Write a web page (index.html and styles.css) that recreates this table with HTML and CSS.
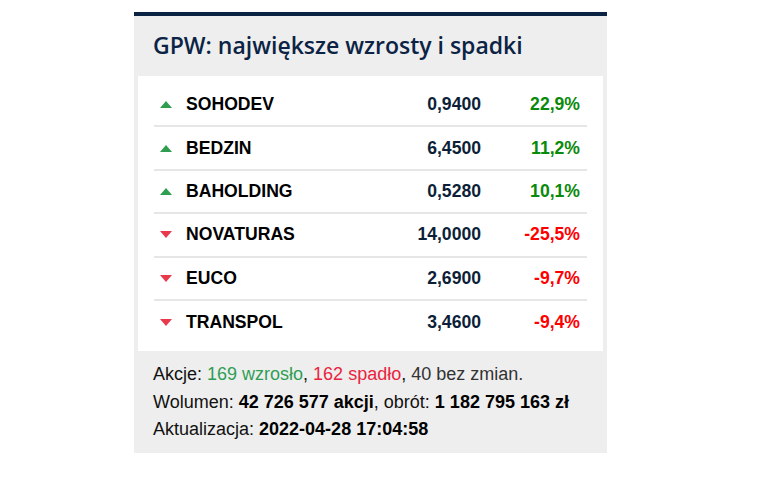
FILE: index.html
```html
<!DOCTYPE html>
<html lang="pl">
<head>
<meta charset="utf-8">
<title>GPW</title>
<link rel="stylesheet" href="styles.css">
</head>
<body>
<div class="widget">
  <h2 class="title">GPW: największe wzrosty i spadki</h2>
  <div class="table">
    <div class="row">
      <span class="arrow"><svg width="12" height="7" viewBox="0 0 12 7"><polygon points="6,0 12,7 0,7" class="up"/></svg></span>
      <span class="name">SOHODEV</span>
      <span class="price">0,9400</span>
      <span class="pct pos">22,9%</span>
    </div>
    <div class="row">
      <span class="arrow"><svg width="12" height="7" viewBox="0 0 12 7"><polygon points="6,0 12,7 0,7" class="up"/></svg></span>
      <span class="name">BEDZIN</span>
      <span class="price">6,4500</span>
      <span class="pct pos">11,2%</span>
    </div>
    <div class="row">
      <span class="arrow"><svg width="12" height="7" viewBox="0 0 12 7"><polygon points="6,0 12,7 0,7" class="up"/></svg></span>
      <span class="name">BAHOLDING</span>
      <span class="price">0,5280</span>
      <span class="pct pos">10,1%</span>
    </div>
    <div class="row">
      <span class="arrow"><svg width="12" height="7" viewBox="0 0 12 7"><polygon points="0,0 12,0 6,7" class="down"/></svg></span>
      <span class="name">NOVATURAS</span>
      <span class="price">14,0000</span>
      <span class="pct neg">-25,5%</span>
    </div>
    <div class="row">
      <span class="arrow"><svg width="12" height="7" viewBox="0 0 12 7"><polygon points="0,0 12,0 6,7" class="down"/></svg></span>
      <span class="name">EUCO</span>
      <span class="price">2,6900</span>
      <span class="pct neg">-9,7%</span>
    </div>
    <div class="row last">
      <span class="arrow"><svg width="12" height="7" viewBox="0 0 12 7"><polygon points="0,0 12,0 6,7" class="down"/></svg></span>
      <span class="name">TRANSPOL</span>
      <span class="price">3,4600</span>
      <span class="pct neg">-9,4%</span>
    </div>
  </div>
  <div class="footer">
    <p>Akcje: <span class="g">169 wzrosło</span>, <span class="r">162 spadło</span>, <span class="n">40 bez zmian.</span></p>
    <p>Wolumen: <b>42 726 577 akcji</b>, obrót: <b>1 182 795 163 zł</b></p>
    <p>Aktualizacja: <b>2022-04-28 17:04:58</b></p>
  </div>
</div>
</body>
</html>
```
FILE: styles.css
```css
html, body {
  margin: 0;
  padding: 0;
  background: #fff;
}
body {
  padding: 12px 0 0 134px;
  font-family: "Liberation Sans", Arial, sans-serif;
}
.widget {
  width: 473px;
  box-sizing: border-box;
  background: #eeeeee;
  border-top: 4px solid #0b2342;
  padding: 0 4px;
}
.title {
  margin: 0;
  padding: 14px 0 16px 15px;
  font-family: "Open Sans", sans-serif;
  font-weight: 600;
  font-size: 23px;
  line-height: 30px;
  color: #0b2344;
}
.table {
  background: #fff;
  padding: 8px 16px 8px;
}
.row {
  display: flex;
  align-items: center;
  height: 43.4px;
  box-sizing: border-box;
  border-bottom: 2px solid #e6e6e6;
  font-size: 17.6px;
  font-weight: 700;
}
.row.last {
  border-bottom: none;
  height: 42.4px;
}
.arrow {
  display: flex;
  width: 12px;
  margin: 0 14px 0 6px;
}
.arrow svg { display: block; }
.up { fill: #2f9e50; }
.down { fill: #e83a4c; }
.name {
  flex: 1;
  color: #000;
}
.price {
  color: #0d1f38;
  text-align: right;
}
.pct {
  width: 99px;
  padding-right: 7px;
  text-align: right;
}
.pos { color: #0a8a0a; }
.neg { color: #ff0000; }
.footer {
  padding: 10px 15px 9px;
  font-size: 18px;
  line-height: 27.5px;
  color: #111;
}
.footer p { margin: 0; }
.footer b { color: #000; }
.g { color: #2e9e55; }
.r { color: #ea2340; }
.n { color: #333; }
```
